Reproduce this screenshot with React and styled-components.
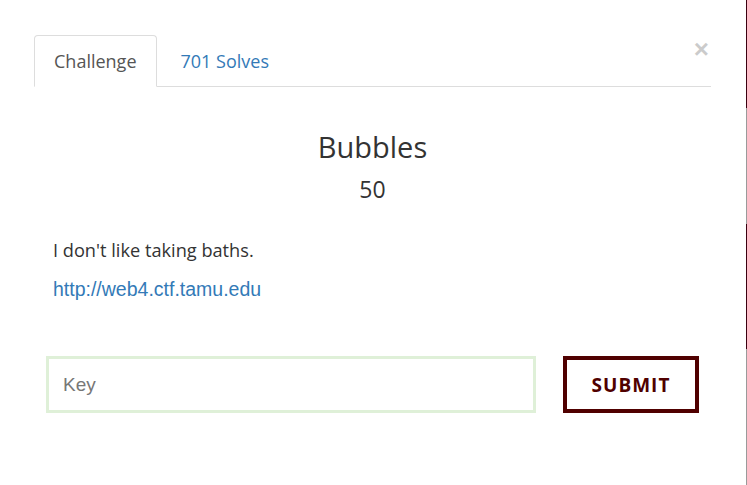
import React from 'react';
import styled, { createGlobalStyle } from 'styled-components';

const GlobalStyle = createGlobalStyle`
  html, body {
    margin: 0;
    padding: 0;
    background: #fff;
  }
  body {
    font-family: "Open Sans", "Noto Sans", sans-serif;
    color: #333;
  }
`;

const Page = styled.div`
  display: flex;
  width: 747px;
  height: 485px;
  overflow: hidden;
`;

const Modal = styled.div`
  flex: 1;
  padding: 35px 35px 0 34px;
  background: #fff;
`;

const Edge = styled.div`
  width: 1px;
  display: flex;
  flex-direction: column;
`;

const EdgePart = styled.div`
  height: ${(p) => p.$h}px;
  background: ${(p) => (p.$dark ? '#3a0010' : '#9a9a9a')};
`;

const TabBar = styled.div`
  display: flex;
  align-items: flex-start;
  gap: 4px;
  border-bottom: 1px solid #ddd;
`;

const Tab = styled.div`
  padding: 0 19px;
  font-size: 18px;
  line-height: 50px;
  border: 1px solid ${(p) => (p.$active ? '#ddd' : 'transparent')};
  border-bottom-color: transparent;
  border-radius: 4px 4px 0 0;
  margin-bottom: -1px;
  background: ${(p) => (p.$active ? '#fff' : 'transparent')};
  color: ${(p) => (p.$active ? '#555' : '#337ab7')};
  cursor: pointer;
`;

const Close = styled.button`
  margin-left: auto;
  margin-right: 2px;
  margin-top: 1px;
  padding: 0;
  border: 0;
  background: none;
  font-family: "Liberation Sans", Arial, sans-serif;
  font-weight: 700;
  font-size: 26px;
  line-height: 26px;
  color: #000;
  opacity: 0.2;
  cursor: pointer;
`;

const Body = styled.div`
  padding: 0 12px;
`;

const Title = styled.h3`
  margin: 42px 0 0;
  text-align: center;
  font-weight: 400;
  font-size: 29px;
  line-height: 36px;
  color: #333;
`;

const Points = styled.h4`
  margin: 9px 0 0;
  text-align: center;
  font-weight: 400;
  font-size: 23px;
  line-height: 30px;
  color: #333;
`;

const Description = styled.p`
  margin: 33px 0 0;
  padding: 0 7px;
  font-size: 18.2px;
  line-height: 26px;
`;

const LinkLine = styled.p`
  margin: 13px 0 0;
  padding: 0 7px;
  font-family: "Liberation Sans", Arial, sans-serif;
  font-size: 19.5px;
  line-height: 26px;
`;

const Link = styled.a`
  color: #337ab7;
  text-decoration: none;
`;

const Form = styled.form`
  display: flex;
  gap: 27px;
  margin-top: 54px;
`;

const KeyInput = styled.input`
  box-sizing: border-box;
  width: 490px;
  height: 57px;
  padding: 0 14px;
  border: 3px solid #dff0d8;
  outline: none;
  font-family: "Liberation Sans", Arial, sans-serif;
  font-size: 19px;
  color: #555;
  &::placeholder {
    color: #777;
  }
`;

const Submit = styled.button`
  box-sizing: border-box;
  width: 136px;
  height: 57px;
  border: 4px solid #500000;
  background: #fff;
  color: #500000;
  font-family: "Open Sans", "Noto Sans", sans-serif;
  font-weight: 700;
  font-size: 19px;
  letter-spacing: 1px;
  cursor: pointer;
`;

const edge = [
  [108, true],
  [116, false],
  [125, true],
  [136, false],
];

export default function App() {
  return (
    <Page>
      <GlobalStyle />
      <Modal>
        <TabBar>
          <Tab $active>Challenge</Tab>
          <Tab>701 Solves</Tab>
          <Close type="button">×</Close>
        </TabBar>
        <Body>
          <Title>Bubbles</Title>
          <Points>50</Points>
          <Description>I don't like taking baths.</Description>
          <LinkLine>
            <Link href="#">http://web4.ctf.tamu.edu</Link>
          </LinkLine>
          <Form onSubmit={(e) => e.preventDefault()}>
            <KeyInput placeholder="Key" />
            <Submit type="submit">SUBMIT</Submit>
          </Form>
        </Body>
      </Modal>
      <Edge>
        {edge.map(([h, dark], i) => (
          <EdgePart key={i} $h={h} $dark={dark} />
        ))}
      </Edge>
    </Page>
  );
}
